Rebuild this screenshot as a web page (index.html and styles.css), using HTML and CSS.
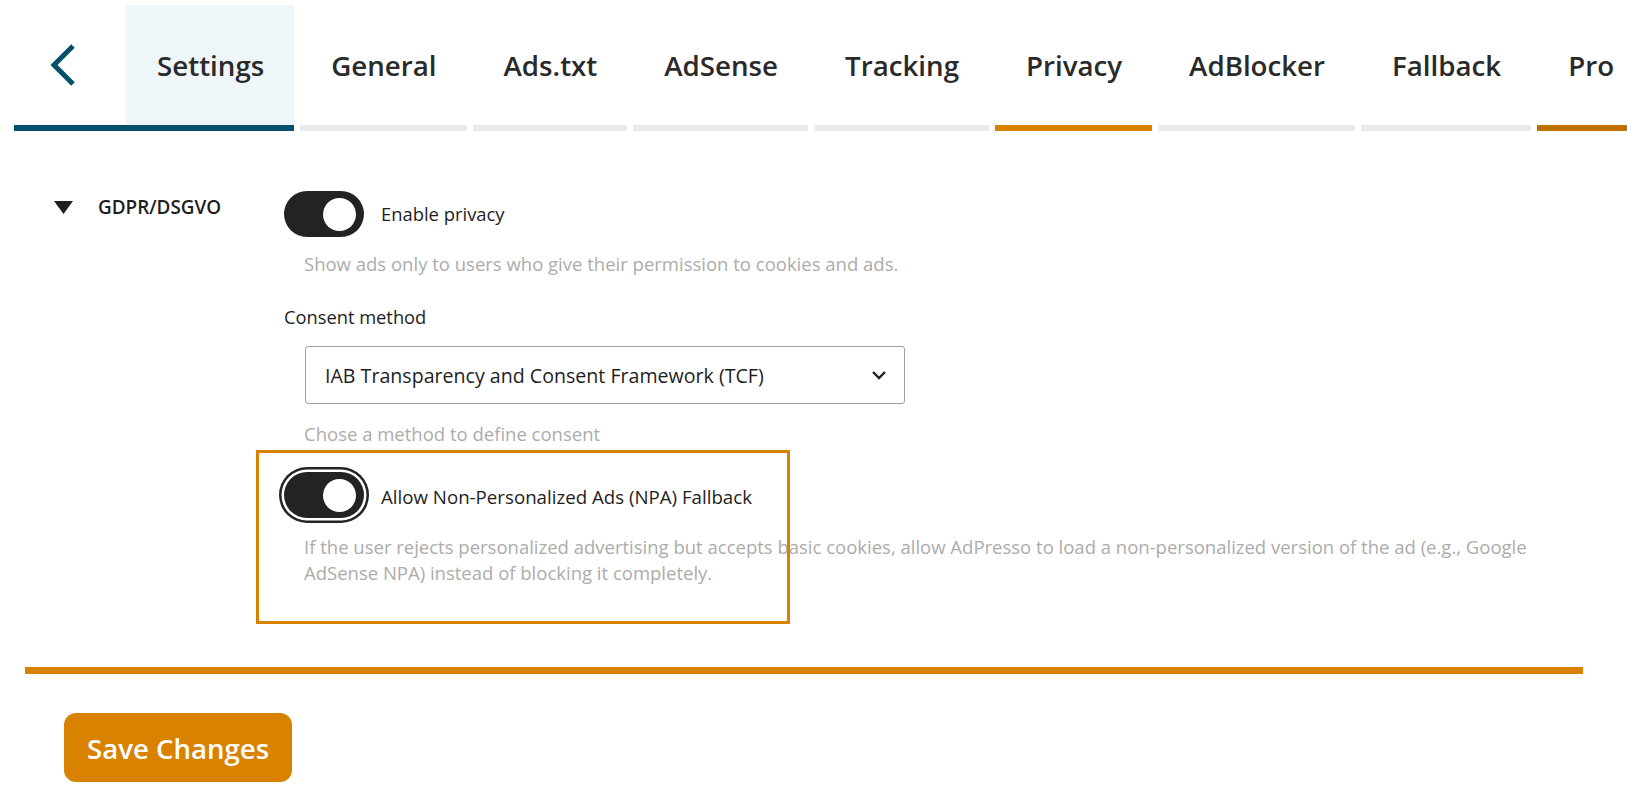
FILE: index.html
```html
<!DOCTYPE html>
<html lang="en">
<head>
    <meta charset="UTF-8">
    <meta name="viewport" content="width=device-width, initial-scale=1.0">
    <title>AdPresso - Privacy</title>
    <link rel="stylesheet" href="styles.css">
</head>
<body>
    <div class="page">
        <!-- tab navigation -->
        <nav class="tabs">
            <div class="tab-group">
                <a class="tab tab-back" href="#" aria-label="Back">
                    <svg width="28" height="44" viewBox="0 0 28 44">
                        <polyline points="24,3 5,22 24,41" />
                    </svg>
                </a>
                <a class="tab tab-current" href="#">Settings</a>
            </div>
            <a class="tab" href="#">General</a>
            <a class="tab" href="#">Ads.txt</a>
            <a class="tab" href="#">AdSense</a>
            <a class="tab" href="#">Tracking</a>
            <a class="tab tab-active" href="#">Privacy</a>
            <a class="tab" href="#">AdBlocker</a>
            <a class="tab" href="#">Fallback</a>
            <a class="tab tab-pro" href="#">Pro</a>
        </nav>

        <form class="settings">
            <div class="section">
                <div class="section-head">
                    <svg class="caret" width="19" height="13" viewBox="0 0 19 13">
                        <polygon points="0,0 19,0 9.5,13" />
                    </svg>
                    <span>GDPR/DSGVO</span>
                </div>

                <div class="fields">
                    <div class="switch-row">
                        <span class="switch"><span class="knob"></span></span>
                        <span class="switch-label">Enable privacy</span>
                    </div>
                    <p class="desc">Show ads only to users who give their permission to cookies and ads.</p>

                    <div class="field-label">Consent method</div>
                    <div class="select">
                        <span>IAB Transparency and Consent Framework (TCF)</span>
                        <svg width="16" height="10" viewBox="0 0 16 10">
                            <polyline points="2,2 8,8 14,2" />
                        </svg>
                    </div>
                    <p class="desc">Chose a method to define consent</p>

                    <!-- NPA option (highlighted) -->
                    <div class="npa">
                        <div class="npa-mark"></div>
                        <div class="switch-row">
                            <span class="switch switch-focus"><span class="knob"></span></span>
                            <span class="switch-label">Allow Non-Personalized Ads (NPA) Fallback</span>
                        </div>
                        <p class="desc">If the user rejects personalized advertising but accepts basic cookies, allow AdPresso to load a non-personalized version of the ad (e.g., Google AdSense NPA) instead of blocking it completely.</p>
                    </div>
                </div>
            </div>

            <div class="actions">
                <button type="button" class="btn-save">Save Changes</button>
            </div>
        </form>
    </div>
</body>
</html>
```

FILE: styles.css
```css
html,body{
    margin: 0;
    padding: 0;
}
body{
    font-family: "Open Sans", "Noto Sans", sans-serif;
    color: #1e1e1e;
    background: #fff;
    overflow: hidden;
}
.page{
    width: 100vw;
    height: 100vh;
}

/* tabs */
.tabs{
    display: flex;
    gap: 6px;
    padding: 5px 0 0 14px;
    white-space: nowrap;
}
.tab-group{
    display: flex;
    border-bottom: 6px solid #02506a;
}
.tab{
    display: flex;
    align-items: center;
    height: 120px;
    padding: 0 30px 0 31px;
    font-size: 27.7px;
    font-weight: 600;
    color: #2a2a2a;
    text-decoration: none;
    border-bottom: 6px solid #ebebeb;
    flex: none;
}
.tab-group .tab{
    border-bottom: 0;
}
.tab-back{
    padding: 0 49px 0 35px;
}
.tab-back polyline{
    fill: none;
    stroke: #02506a;
    stroke-width: 5;
}
.tab-current{
    background: #eef6f9;
}
.tab-active{
    border-bottom-color: #d98200;
}
.tab-pro{
    border-bottom-color: #c07200;
}

/* form */
.settings{
    margin: 0 44px 0 25px;
}
.section{
    display: flex;
    padding: 60px 0 81px 29px;
    border-bottom: 7px solid #d98200;
}
.section-head{
    flex: none;
    width: 230px;
    display: flex;
    align-items: center;
    align-self: flex-start;
    gap: 25px;
    margin-top: 3px;
    font-size: 18.9px;
    font-weight: 600;
    height: 26px;
}
.caret polygon{
    fill: #1e1e1e;
}
.fields{
    flex: 1;
}

/* switch */
.switch-row{
    display: flex;
    align-items: center;
    gap: 17px;
}
.switch{
    position: relative;
    flex: none;
    width: 80px;
    height: 46px;
    border-radius: 23px;
    background: #232323;
}
.switch .knob{
    position: absolute;
    top: 6.5px;
    right: 8px;
    width: 33px;
    height: 33px;
    border-radius: 50%;
    background: #fff;
}
.switch-focus{
    box-shadow: 0 0 0 2.5px #fff, 0 0 0 5px #232323;
}
.switch-label{
    font-size: 18.4px;
    line-height: 26px;
}
.npa .switch-label{
    margin-top: 4px;
    font-size: 18.7px;
}

.desc{
    margin: 14px 0 0 20px;
    font-size: 18.5px;
    line-height: 26px;
    color: #acacac;
}
.field-label{
    margin-top: 27px;
    font-size: 18.3px;
    line-height: 26px;
}
.select{
    display: flex;
    align-items: center;
    justify-content: space-between;
    box-sizing: border-box;
    width: 600px;
    height: 58px;
    margin: 16px 0 0 21px;
    padding: 0 17px 0 19px;
    border: 1px solid #a0a0a0;
    border-radius: 3px;
    font-size: 19.6px;
}
.select polyline{
    fill: none;
    stroke: #1e1e1e;
    stroke-width: 2.4;
}
.select + .desc{
    margin-top: 17px;
}

/* highlighted npa option */
.npa{
    position: relative;
    margin-top: 25px;
}
.npa-mark{
    position: absolute;
    left: -28px;
    top: -22px;
    width: 534px;
    height: 174px;
    box-sizing: border-box;
    border: 3px solid #d98200;
    pointer-events: none;
}
.npa .desc{
    margin-top: 16px;
}

/* save */
.actions{
    padding: 39px 0 0 39px;
}
.btn-save{
    height: 69px;
    padding: 0 23px;
    border: 0;
    border-radius: 12px;
    background: #d98200;
    color: #fff;
    font-family: inherit;
    font-size: 27.6px;
    font-weight: 600;
}
```
